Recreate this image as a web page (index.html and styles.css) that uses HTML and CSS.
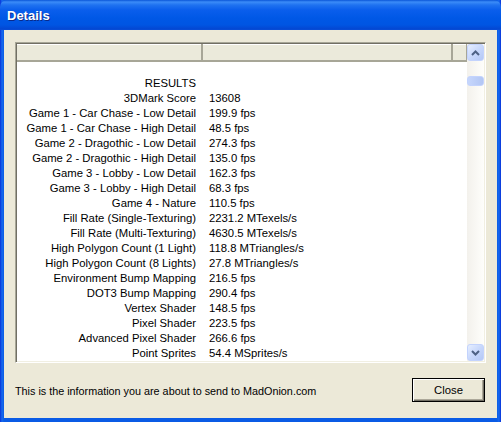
FILE: index.html
```html
<!DOCTYPE html>
<html>
<head>
<meta charset="utf-8">
<link rel="stylesheet" href="styles.css">
</head>
<body>
<div class="window">
  <div class="titlebar"><span class="title">Details</span></div>
  <div class="client">
    <div class="list">
      <div class="list-main">
        <div class="header">
          <div class="hcell c1"></div>
          <div class="hcell c2"></div>
          <div class="hcell c3"></div>
        </div>
        <div class="rows">
          <div class="row"><span class="k">RESULTS</span><span class="v"></span></div>
          <div class="row"><span class="k">3DMark Score</span><span class="v">13608</span></div>
          <div class="row"><span class="k">Game 1 - Car Chase - Low Detail</span><span class="v">199.9 fps</span></div>
          <div class="row"><span class="k">Game 1 - Car Chase - High Detail</span><span class="v">48.5 fps</span></div>
          <div class="row"><span class="k">Game 2 - Dragothic - Low Detail</span><span class="v">274.3 fps</span></div>
          <div class="row"><span class="k">Game 2 - Dragothic - High Detail</span><span class="v">135.0 fps</span></div>
          <div class="row"><span class="k">Game 3 - Lobby - Low Detail</span><span class="v">162.3 fps</span></div>
          <div class="row"><span class="k">Game 3 - Lobby - High Detail</span><span class="v">68.3 fps</span></div>
          <div class="row"><span class="k">Game 4 - Nature</span><span class="v">110.5 fps</span></div>
          <div class="row"><span class="k">Fill Rate (Single-Texturing)</span><span class="v">2231.2 MTexels/s</span></div>
          <div class="row"><span class="k">Fill Rate (Multi-Texturing)</span><span class="v">4630.5 MTexels/s</span></div>
          <div class="row"><span class="k">High Polygon Count (1 Light)</span><span class="v">118.8 MTriangles/s</span></div>
          <div class="row"><span class="k">High Polygon Count (8 Lights)</span><span class="v">27.8 MTriangles/s</span></div>
          <div class="row"><span class="k">Environment Bump Mapping</span><span class="v">216.5 fps</span></div>
          <div class="row"><span class="k">DOT3 Bump Mapping</span><span class="v">290.4 fps</span></div>
          <div class="row"><span class="k">Vertex Shader</span><span class="v">148.5 fps</span></div>
          <div class="row"><span class="k">Pixel Shader</span><span class="v">223.5 fps</span></div>
          <div class="row"><span class="k">Advanced Pixel Shader</span><span class="v">266.6 fps</span></div>
          <div class="row"><span class="k">Point Sprites</span><span class="v">54.4 MSprites/s</span></div>
        </div>
      </div>
      <div class="scrollbar">
        <div class="sbtn up"><svg width="9" height="6" viewBox="0 0 9 6"><path d="M1 5 L4.5 1.5 L8 5" fill="none" stroke="#4D6185" stroke-width="2"/></svg></div>
        <div class="track">
          <div class="thumb"></div>
        </div>
        <div class="sbtn down"><svg width="9" height="6" viewBox="0 0 9 6"><path d="M1 1 L4.5 4.5 L8 1" fill="none" stroke="#4D6185" stroke-width="2"/></svg></div>
      </div>
    </div>
    <div class="footer">
      <span class="info">This is the information you are about to send to MadOnion.com</span>
      <button class="close">Close</button>
    </div>
  </div>
</div>
</body>
</html>
```
FILE: styles.css
```css
html, body {
  margin: 0;
  padding: 0;
  width: 501px;
  height: 422px;
  overflow: hidden;
}
.window {
  width: 501px;
  height: 422px;
  display: flex;
  flex-direction: column;
  background: linear-gradient(90deg, #0831D9 0px, #166AEE 2px, #0A5BE5 4px, #0A5BE5 497px, #166AEE 499px, #0831D9 501px);
  font-family: "Liberation Sans", Arial, sans-serif;
  font-size: 11.3px;
  color: #000;
}
.titlebar {
  height: 30px;
  flex: none;
  display: flex;
  align-items: center;
  padding-left: 7px;
  background: linear-gradient(180deg, #0A56D8 0px, #3B8CF8 2px, #1F72F0 5px, #0A5EEC 10px, #0058E6 18px, #0055E2 25px, #0447D2 29px, #0A4FD8 30px);
  border-radius: 7px 7px 0 0;
}
.title {
  color: #fff;
  font-weight: bold;
  font-size: 13px;
  text-shadow: 1px 1px 0 #0A2A8A;
  margin-top: 1px;
}
.client {
  flex: 1;
  margin: 0 4px 4px 4px;
  background: #ECE9D8;
  display: flex;
  flex-direction: column;
  padding: 12px 11px 0 11px;
}
.list {
  height: 321px;
  flex: none;
  box-sizing: border-box;
  display: flex;
  background: #fff;
  border-top: 1px solid #A7A697;
  border-left: 1px solid #A7A697;
  border-right: 1px solid #fff;
  border-bottom: 1px solid #fff;
  box-shadow: inset 1px 1px 0 #716F64, inset -1px -1px 0 #F1EFE2;
  padding: 1px;
}
.list-main {
  flex: 1;
  display: flex;
  flex-direction: column;
  min-width: 0;
  overflow: hidden;
}
.header {
  display: flex;
  height: 18px;
  flex: none;
}
.hcell {
  box-sizing: border-box;
  height: 18px;
  background: #EBEADB;
  border-bottom: 2px solid #A7A697;
  border-right: 2px solid #A7A697;
  box-shadow: inset 0 1px 0 #fff;
}
.c1 { width: 186px; }
.c2 { width: 250px; }
.c3 { flex: 1; border-right: 1px solid #A7A697; }
.rows {
  padding-top: 14px;
}
.row {
  display: flex;
  height: 15px;
  line-height: 15px;
  white-space: nowrap;
}
.k {
  width: 186px;
  box-sizing: border-box;
  padding-right: 7px;
  text-align: right;
  flex: none;
}
.v {
  padding-left: 6px;
}
.scrollbar {
  width: 17px;
  flex: none;
  display: flex;
  flex-direction: column;
  background: linear-gradient(90deg, #F3F1EC, #FEFEFB);
}
.sbtn {
  box-sizing: border-box;
  height: 17px;
  width: 17px;
  flex: none;
  border: 1px solid #C3D3FD;
  border-radius: 3px;
  background: linear-gradient(135deg, #E6EEFF 0%, #C8D8FC 50%, #B4C8F6 100%);
  display: flex;
  align-items: center;
  justify-content: center;
}
.track {
  flex: 1;
  position: relative;
}
.thumb {
  position: absolute;
  left: 0;
  top: 15px;
  width: 17px;
  height: 10px;
  box-sizing: border-box;
  border: 1px solid #C3D3FD;
  border-radius: 3px;
  background: linear-gradient(90deg, #C6D6FC, #B2C6F4);
}
.footer {
  flex: 1;
  display: flex;
  align-items: center;
  justify-content: space-between;
  padding-right: 1px;
}
.info {
  font-size: 10.8px;
  padding-top: 1px;
}
.close {
  width: 73px;
  height: 24px;
  box-sizing: border-box;
  border: 1px solid #000;
  background: #ECE9D8;
  box-shadow: inset 1px 1px 0 #fff, inset -1px -1px 0 #716F64, inset -2px -2px 0 #ACA899;
  font-family: "Liberation Sans", Arial, sans-serif;
  font-size: 11.3px;
  color: #000;
  padding: 0;
  margin-top: -2px;
}
```
